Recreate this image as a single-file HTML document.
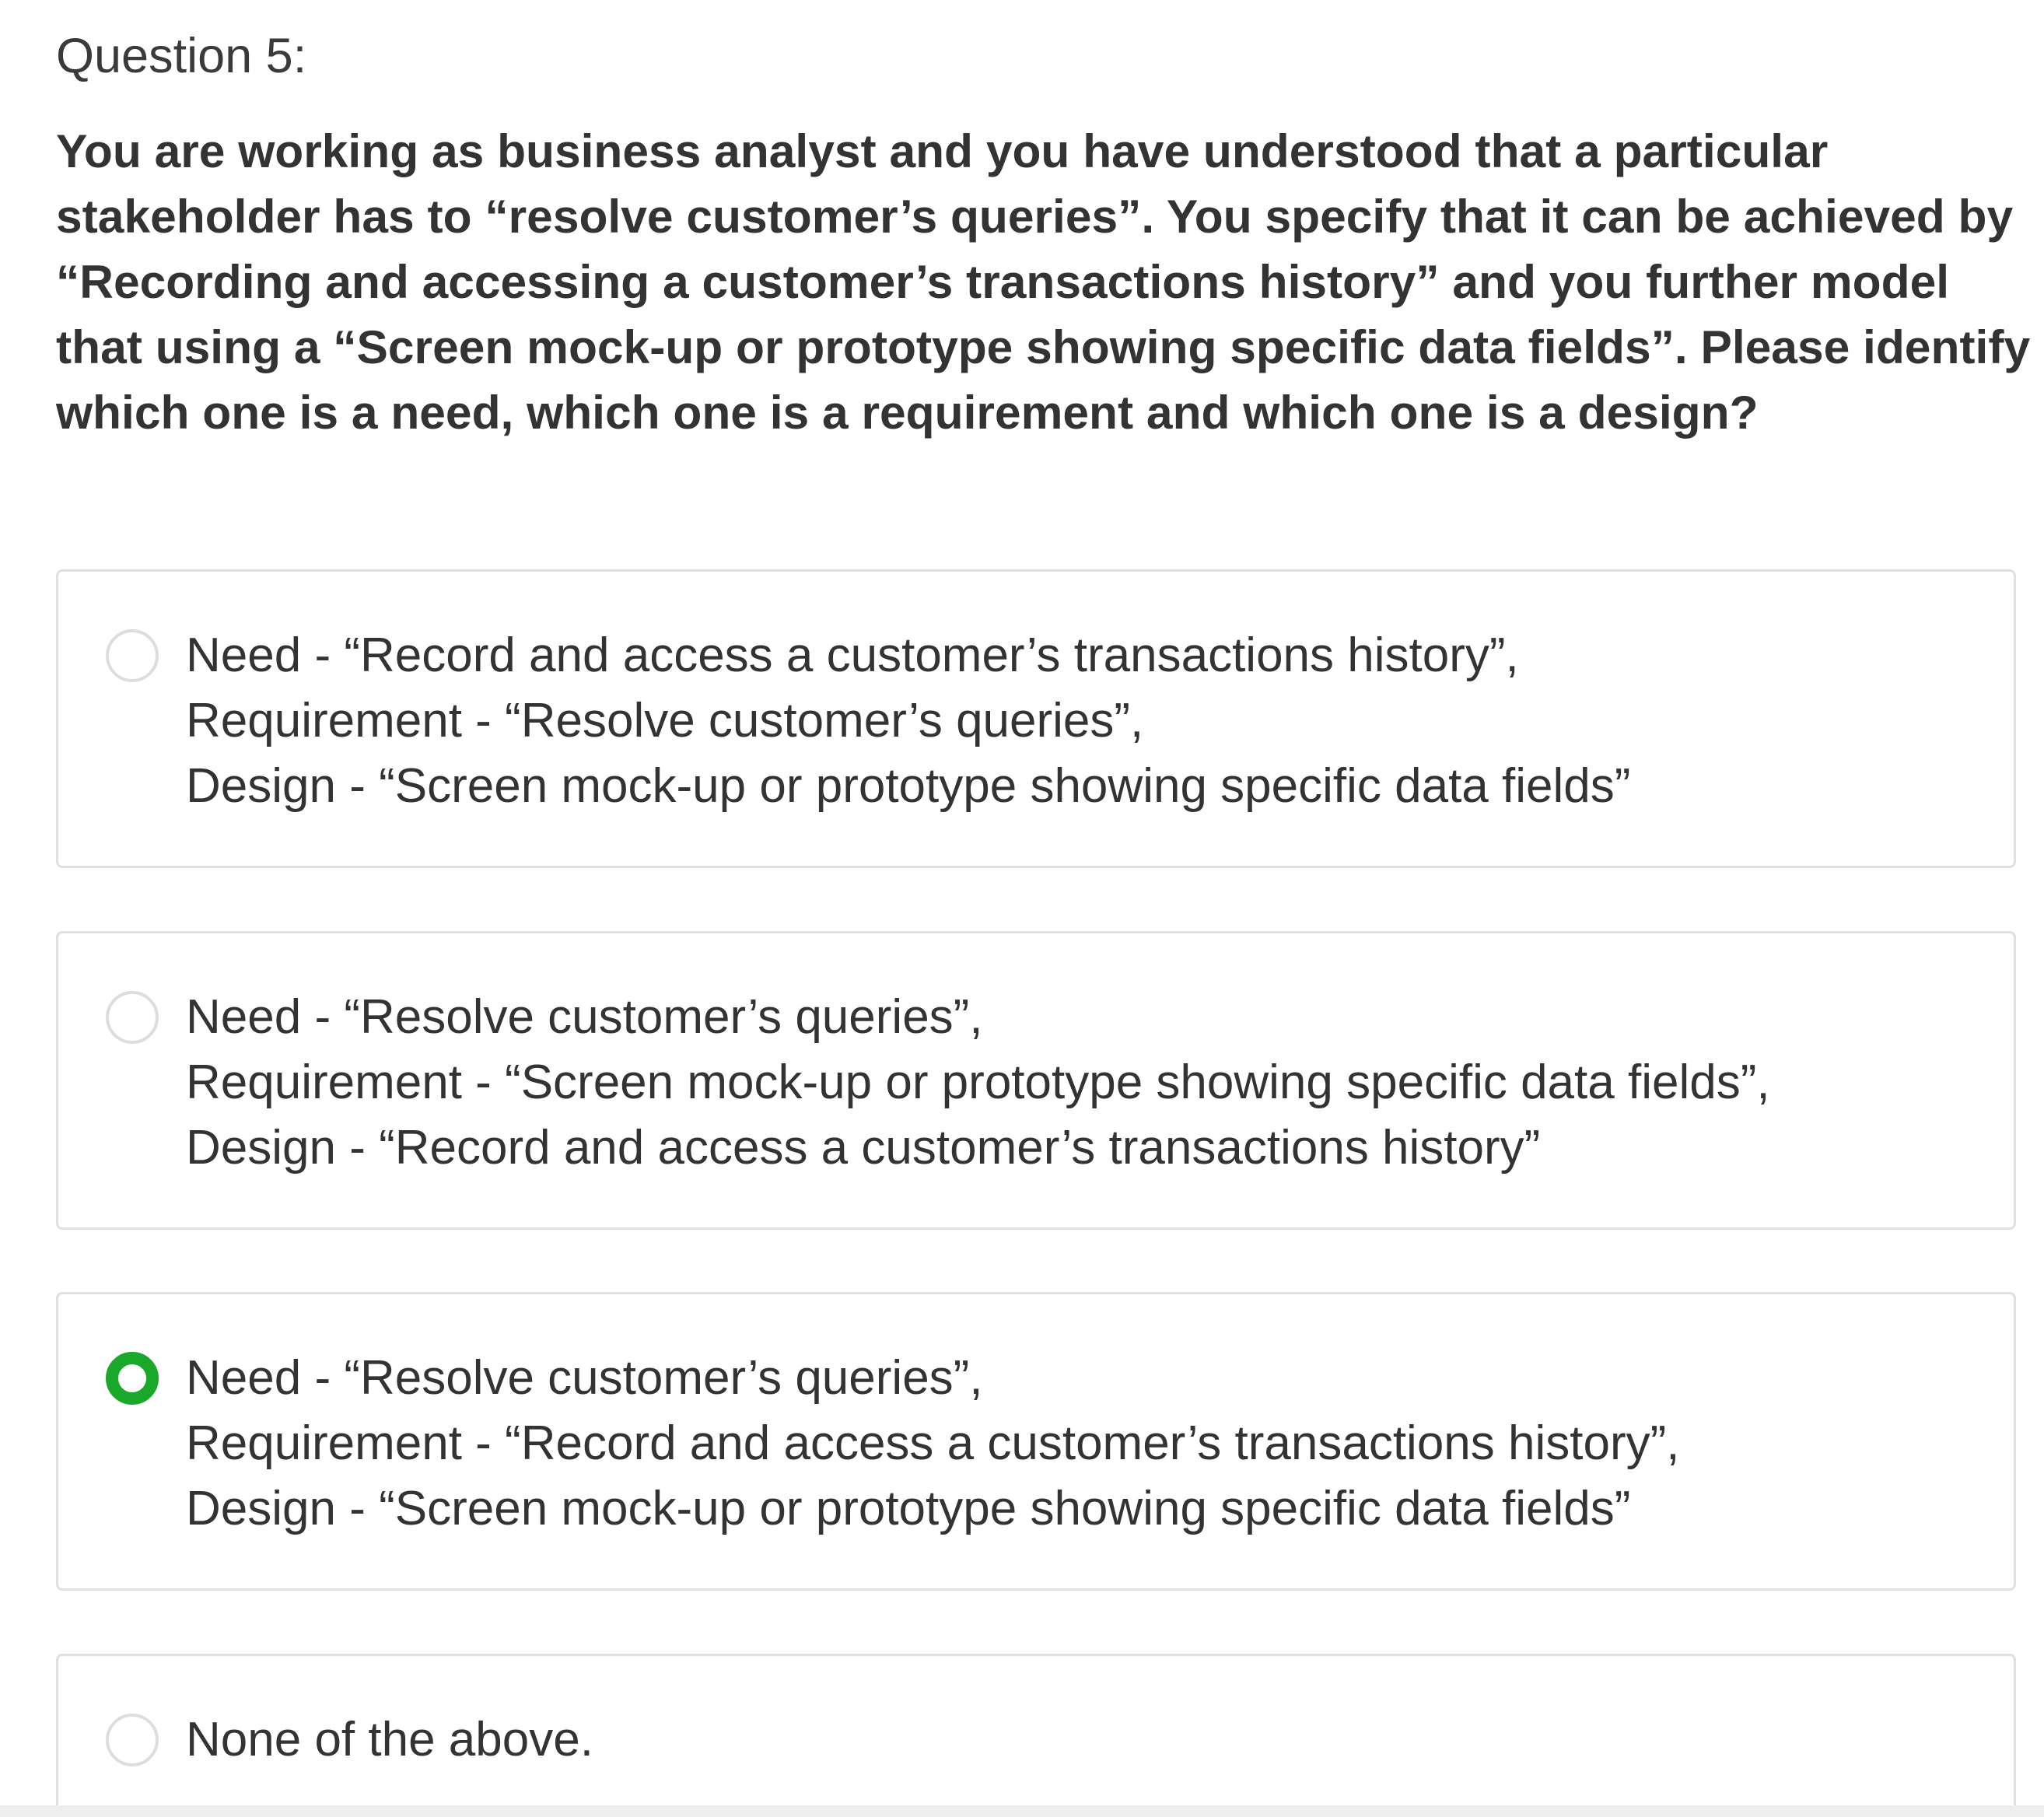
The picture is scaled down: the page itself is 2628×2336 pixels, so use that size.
<!DOCTYPE html>
<html><head><meta charset="utf-8"><style>
html,body{margin:0;padding:0;background:#fff;overflow:hidden;}
body{width:2628px;height:2336px;position:relative;overflow:hidden;font-family:"Liberation Sans",sans-serif;color:#333;}
.q{position:absolute;left:72px;top:36px;font-size:63px;color:#3a3a3a;}
.t{position:absolute;left:72px;top:152px;width:2560px;font-size:60.5px;font-weight:bold;line-height:84px;color:#333;white-space:nowrap;}
.box{position:absolute;left:72px;width:2520px;height:384px;border:3px solid #e0e0e0;border-radius:8px;box-sizing:border-box;}
.r{position:absolute;left:61px;width:68px;height:68px;border:4px solid #ddd;border-radius:50%;box-sizing:border-box;}
.r.on{border:16px solid #1aa82b;}
.o{position:absolute;left:164px;font-size:62px;line-height:84px;color:#333;white-space:nowrap;}
.bar{position:absolute;left:0;top:2321px;width:2628px;height:15px;background:#eee;}
</style></head><body>
<div class="q">Question 5:</div>
<div class="t">You are working as business analyst and you have understood that a particular<br>stakeholder has to “resolve customer’s queries”. You specify that it can be achieved by<br>“Recording and accessing a customer’s transactions history” and you further model<br>that using a “Screen mock-up or prototype showing specific data fields”. Please identify<br>which one is a need, which one is a requirement and which one is a design?</div>

<div class="box" style="top:732px"><div class="r" style="top:74px"></div>
<div class="o" style="top:66px">Need - “Record and access a customer’s transactions history”,<br>Requirement - “Resolve customer’s queries”,<br>Design - “Screen mock-up or prototype showing specific data fields”</div></div>

<div class="box" style="top:1197px"><div class="r" style="top:74px"></div>
<div class="o" style="top:66px">Need - “Resolve customer’s queries”,<br>Requirement - “Screen mock-up or prototype showing specific data fields”,<br>Design - “Record and access a customer’s transactions history”</div></div>

<div class="box" style="top:1661px"><div class="r on" style="top:74px"></div>
<div class="o" style="top:66px">Need - “Resolve customer’s queries”,<br>Requirement - “Record and access a customer’s transactions history”,<br>Design - “Screen mock-up or prototype showing specific data fields”</div></div>

<div class="box" style="top:2126px;height:210px;border-bottom:none;border-radius:8px 8px 0 0"><div class="r" style="top:74px"></div>
<div class="o" style="top:66px">None of the above.</div></div>
<div class="bar"></div>
</body></html>
